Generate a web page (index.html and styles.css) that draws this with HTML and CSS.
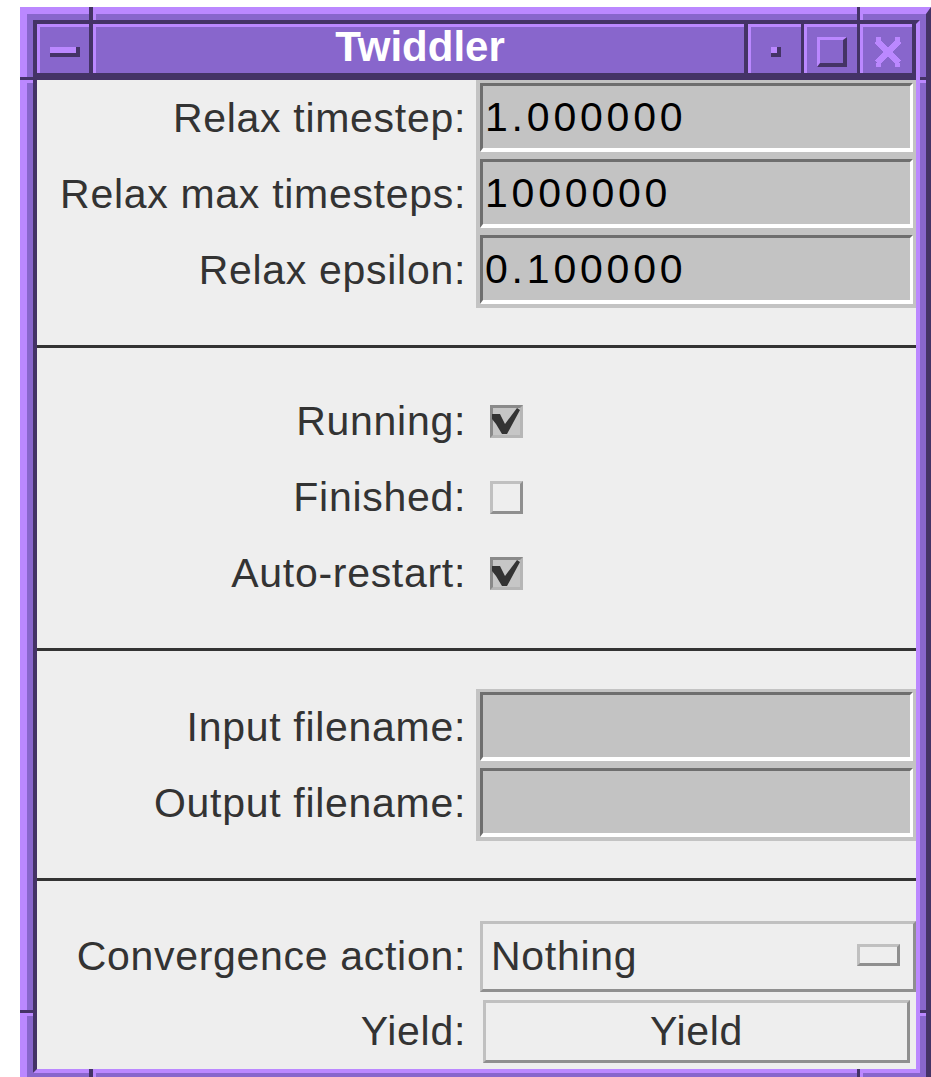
FILE: index.html
```html
<!DOCTYPE html>
<html lang="en">
<head>
<meta charset="utf-8">
<title>Twiddler</title>
<link rel="stylesheet" href="styles.css">
</head>
<body>
<div class="frame">
  <!-- resize-handle notches on the window frame -->
  <span class="notch dark h-tl"></span><span class="notch lite h-tl2"></span>
  <span class="notch dark h-tr"></span><span class="notch lite h-tr2"></span>
  <span class="notch dark h-lt"></span><span class="notch lite h-lt2"></span>
  <span class="notch dark h-lb"></span><span class="notch lite h-lb2"></span>
  <span class="notch dark h-rt"></span><span class="notch lite h-rt2"></span>
  <span class="notch dark h-rb"></span><span class="notch lite h-rb2"></span>
  <span class="notch dark h-bl"></span><span class="notch lite h-bl2"></span>
  <span class="notch dark h-br"></span><span class="notch lite h-br2"></span>

  <div class="inner">
    <div class="titlebar">
      <div class="tbtn menu"><div class="g-menu"></div></div>
      <div class="tbtn title">Twiddler</div>
      <div class="tbtn iconify"><div class="g-iconify"></div></div>
      <div class="tbtn maximize"><div class="g-max"></div></div>
      <div class="tbtn close">
        <svg class="g-close" width="30" height="30" viewBox="0 0 30 30" shape-rendering="crispEdges">
          <path d="M4 4 L26 26 M26 4 L4 26" stroke="#bb88ff" stroke-width="7" stroke-linecap="butt" fill="none"/>
          <rect x="3" y="0" width="5" height="4" fill="#bb88ff"/>
          <rect x="22" y="0" width="5" height="4" fill="#bb88ff"/>
          <rect x="3" y="26" width="5" height="4" fill="#bb88ff"/>
          <rect x="22" y="26" width="5" height="4" fill="#bb88ff"/>
        </svg>
      </div>
    </div>

    <div class="content">
      <div class="section sec1">
        <div class="label">Relax timestep:</div>
        <div class="field"><div class="field-box">1.000000</div></div>
        <div class="label">Relax max timesteps:</div>
        <div class="field"><div class="field-box">1000000</div></div>
        <div class="label">Relax epsilon:</div>
        <div class="field"><div class="field-box">0.100000</div></div>
      </div>
      <div class="rule"></div>

      <div class="section sec2">
        <div class="label">Running:</div>
        <div class="cell">
          <div class="check on">
            <svg class="tick" width="33" height="33" viewBox="0 0 33 33"><path d="M2 9 L10 9 L15 19 L27 3 L30 5 L17 29 L12 29 L6 19 L2 14 Z" fill="#333"/></svg>
          </div>
        </div>
        <div class="label">Finished:</div>
        <div class="cell"><div class="check off"></div></div>
        <div class="label">Auto-restart:</div>
        <div class="cell">
          <div class="check on">
            <svg class="tick" width="33" height="33" viewBox="0 0 33 33"><path d="M2 9 L10 9 L15 19 L27 3 L30 5 L17 29 L12 29 L6 19 L2 14 Z" fill="#333"/></svg>
          </div>
        </div>
      </div>
      <div class="rule"></div>

      <div class="section sec3">
        <div class="label">Input filename:</div>
        <div class="field"><div class="field-box"></div></div>
        <div class="label">Output filename:</div>
        <div class="field"><div class="field-box"></div></div>
      </div>
      <div class="rule"></div>

      <div class="section sec4">
        <div class="label">Convergence action:</div>
        <div class="select"><span>Nothing</span><span class="indicator"></span></div>
        <div class="label">Yield:</div>
        <div class="button">Yield</div>
      </div>
    </div>
  </div>
</div>
</body>
</html>
```

FILE: styles.css
```css
html, body {
  margin: 0;
  height: 100%;
  overflow: hidden;
  background: #ffffff;
}

body {
  font-family: "Liberation Sans", Arial, sans-serif;
}

/* window frame: raised outer bevel, sunken inner bevel */
.frame {
  position: relative;
  box-sizing: border-box;
  width: 911px;
  height: 1070px;
  margin: 7px 0 0 20px;
  border-top: 7px solid #bb88ff;
  border-left: 7px solid #bb88ff;
  border-right: 5px solid #443366;
  padding: 6px 6px 4px 6px;
  background: #8866cc;
}

.inner {
  box-sizing: border-box;
  height: 100%;
  border: 4px solid;
  border-color: #443366 #bb88ff #bb88ff #443366;
  background: #eeeeee;
  display: flex;
  flex-direction: column;
}

/* frame notches */
.notch { position: absolute; display: block; }
.notch.dark { background: #443366; }
.notch.lite { background: #bb88ff; }
.h-tl  { left: 62px;  top: -7px;  width: 4px;  height: 17px; }
.h-tl2 { left: 66px;  top: 0;     width: 3px;  height: 6px; }
.h-tr  { left: 830px; top: -7px;  width: 3px;  height: 17px; }
.h-tr2 { left: 833px; top: 0;     width: 3px;  height: 6px; }
.h-lt  { left: -7px;  top: 63px;  width: 13px; height: 3px; }
.h-lt2 { left: 0;     top: 66px;  width: 6px;  height: 3px; }
.h-lb  { left: -7px;  top: 996px; width: 13px; height: 3px; }
.h-lb2 { left: 0;     top: 999px; width: 6px;  height: 3px; }
.h-rt  { left: 893px; top: 63px;  width: 11px; height: 3px; }
.h-rt2 { left: 893px; top: 66px;  width: 6px;  height: 3px; }
.h-rb  { left: 893px; top: 996px; width: 11px; height: 3px; }
.h-rb2 { left: 893px; top: 999px; width: 6px;  height: 3px; }
.h-bl  { left: 62px;  top: 1055px; width: 4px; height: 8px; }
.h-bl2 { left: 66px;  top: 1059px; width: 3px; height: 4px; }
.h-br  { left: 830px; top: 1055px; width: 3px; height: 8px; }
.h-br2 { left: 833px; top: 1059px; width: 3px; height: 4px; }

/* title bar */
.titlebar {
  display: flex;
  box-sizing: border-box;
  height: 56px;
  padding: 0 4px 7px 0;
  background: #443366;
  flex: none;
}

.tbtn {
  box-sizing: border-box;
  border-top: 3px solid #bb88ff;
  border-left: 3px solid #bb88ff;
  background: #8866cc;
}

.menu { width: 52px; padding: 20px 0 0 10px; }
.title {
  flex: 1;
  margin-left: 4px;
  color: #ffffff;
  font-weight: bold;
  font-size: 42px;
  line-height: 40px;
  text-align: center;
}
.iconify { width: 53px; margin-left: 4px; padding: 20px 0 0 20px; }
.maximize { width: 53px; margin-left: 3px; padding: 10px 0 0 10px; }
.close { width: 52px; margin-left: 3px; padding: 10px 0 0 10px; }

.g-menu {
  box-sizing: border-box;
  width: 30px;
  height: 10px;
  background: #bb88ff;
  border-right: 4px solid #443366;
  border-bottom: 4px solid #443366;
}

.g-iconify {
  box-sizing: border-box;
  width: 10px;
  height: 10px;
  background: #bb88ff;
  border-right: 4px solid #443366;
  border-bottom: 4px solid #443366;
}

.g-max {
  box-sizing: border-box;
  width: 30px;
  height: 30px;
  border-style: solid;
  border-width: 3px 4px 4px 3px;
  border-color: #bb88ff #443366 #443366 #bb88ff;
}

.g-close { display: block; }

/* dialog body */
.content {
  flex: 1;
  display: flex;
  flex-direction: column;
}

.section {
  display: grid;
  grid-template-columns: 1fr 440px;
  column-gap: 10px;
  grid-auto-rows: 76px;
  align-items: center;
}

.sec1 { padding: 0 0 37px; }
.sec2 { padding: 35px 0 37px; }
.sec3 { padding: 38px 0 37px; }
.sec4 {
  padding: 40px 0 6px;
  grid-template-rows: 71px 63px;
  row-gap: 8px;
}

.rule {
  height: 3px;
  background: #333333;
  flex: none;
}

.label {
  text-align: right;
  white-space: nowrap;
  font-size: 41px;
  line-height: 47px;
  letter-spacing: 0.7px;
  color: #333333;
}

/* text entry */
.field {
  box-sizing: border-box;
  height: 76px;
  padding: 3px 3px 4px 4px;
  background: #c3c3c3;
}

.field-box {
  box-sizing: border-box;
  height: 100%;
  border-style: solid;
  border-width: 3px 3px 4px 3px;
  border-color: #6e6e6e #ffffff #ffffff #6e6e6e;
  display: flex;
  align-items: center;
  padding-left: 2px;
  font-size: 41px;
  line-height: 47px;
  letter-spacing: 3.8px;
  color: #000000;
}

/* check boxes */
.cell { display: flex; align-items: center; }

.check {
  box-sizing: border-box;
  width: 33px;
  height: 33px;
  margin-left: 14px;
  border: 3px solid;
}

.check.on {
  border-color: #8a8a8a #b6b6b6 #b6b6b6 #8a8a8a;
  background: #c6c6c6;
}

.check.off {
  border-color: #c0c0c0 #8f8f8f #8f8f8f #c0c0c0;
  background: #eeeeee;
}

.tick {
  display: block;
  margin: -3px;
}

/* option menu and push button */
.select {
  box-sizing: border-box;
  height: 71px;
  margin-left: 4px;
  border: 3px solid;
  border-color: #c0c0c0 #8f8f8f #8f8f8f #c0c0c0;
  display: flex;
  align-items: center;
  justify-content: space-between;
  padding: 0 13px 0 8px;
  font-size: 41px;
  line-height: 47px;
  letter-spacing: 0.7px;
  color: #333333;
}

.indicator {
  box-sizing: border-box;
  width: 43px;
  height: 22px;
  margin-bottom: 3px;
  border: 3px solid;
  border-color: #c0c0c0 #8f8f8f #8f8f8f #c0c0c0;
}

.button {
  box-sizing: border-box;
  width: 427px;
  height: 63px;
  margin-left: 7px;
  border: 3px solid;
  border-color: #c0c0c0 #8f8f8f #8f8f8f #c0c0c0;
  display: flex;
  align-items: center;
  justify-content: center;
  font-size: 41px;
  line-height: 47px;
  letter-spacing: 0.7px;
  color: #333333;
}
```
